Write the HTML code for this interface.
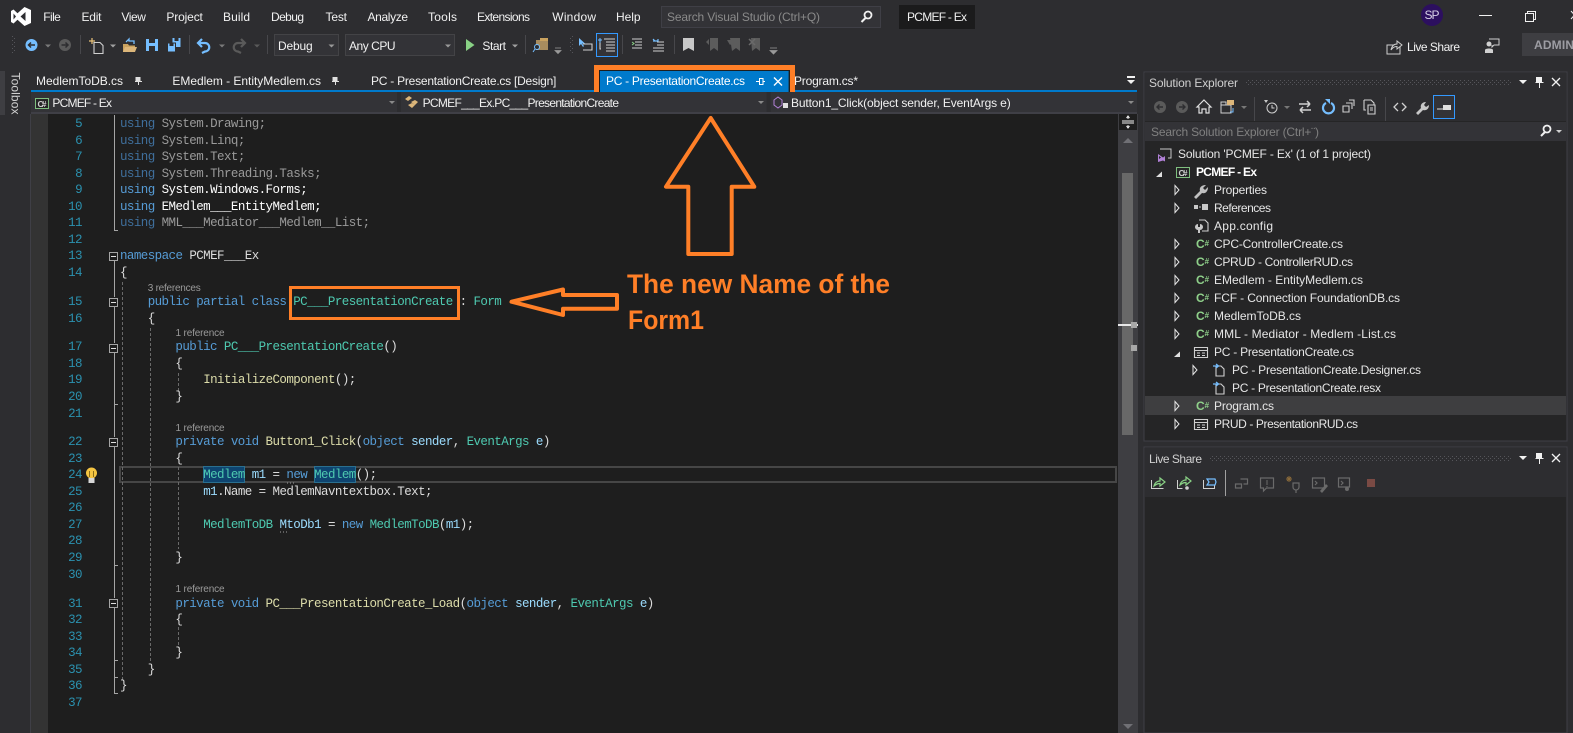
<!DOCTYPE html>
<html><head><meta charset="utf-8"><title>PCMEF - Ex</title>
<style>
html,body{margin:0;padding:0;background:#2d2d30;width:1573px;height:733px;overflow:hidden}
svg{display:block}
text{font-family:"Liberation Sans",sans-serif;font-size:12px;fill:#f1f1f1;white-space:pre}
.c text,text.c{font-family:"Liberation Mono",monospace;font-size:12.500px;letter-spacing:-.57px;fill:#dcdcdc}
.n text{font-family:"Liberation Mono",monospace;font-size:12.500px;letter-spacing:-.57px;fill:#2b91af;text-anchor:end}
.k{fill:#569cd6}.t{fill:#4ec9b0}.m{fill:#dcdcaa}.p{fill:#9cdcfe}.d{fill:#9a9a9a}.dk{fill:#3f6f9c}.b{fill:#fff}.w{fill:#fff;font-weight:bold}
.l text{font-size:10px;fill:#9a9a9a}
.tr text{fill:#e6e6e6}
.cs{font-weight:bold;font-size:12px;fill:#8fd08a}
.cs tspan+tspan{font-size:8px}
.f{stroke:#a5a5a5;fill:none}
.g{stroke:#6a6a6a;stroke-dasharray:3 2;fill:none}
.o{fill:#e0e0e0}.ex{fill:none;stroke:#e6e6e6;stroke-width:1}
.dim{fill:none;stroke:#6a6a6a;stroke-width:1.2}
.ic{fill:none;stroke:#d0d0d0;stroke-width:1.1}
</style></head><body>
<svg width="1573" height="733" viewBox="0 0 1573 733" xmlns="http://www.w3.org/2000/svg">
<defs>
<pattern id="dots" width="4" height="4" patternUnits="userSpaceOnUse"><rect width="1" height="1" fill="#55555a"/><rect x="2" y="2" width="1" height="1" fill="#55555a"/></pattern>
</defs>
<rect width="1573" height="733" fill="#2d2d30"/>

<!-- logo -->
<path fill="#fff" fill-rule="evenodd" d="M24.500 7 L31 10 V23 L24.500 26 L17.500 19.800 L13.500 23.500 L11 22 V11 L13.500 9.500 L17.500 13.200 Z M13.500 13.500 V19.500 L16 16.500 Z M25.500 12 L20.500 16.500 L25.500 21 Z"/>

<!-- menu -->
<g>
<text x="43.300" y="21" textLength="17.500">File</text>
<text x="81.500" y="21" textLength="20">Edit</text>
<text x="121.400" y="21" textLength="24.500">View</text>
<text x="166.400" y="21" textLength="36.500">Project</text>
<text x="223" y="21" textLength="27">Build</text>
<text x="271" y="21" textLength="33">Debug</text>
<text x="325.500" y="21" textLength="21.500">Test</text>
<text x="367.500" y="21" textLength="40.500">Analyze</text>
<text x="428" y="21" textLength="29">Tools</text>
<text x="477" y="21" textLength="53">Extensions</text>
<text x="552.300" y="21" textLength="43.700">Window</text>
<text x="616" y="21" textLength="24.500">Help</text>
</g>
<rect x="661.500" y="6.500" width="219" height="21" fill="#333337" stroke="#3f3f46"/>
<text x="667" y="21" textLength="153" style="fill:#8a8a8a">Search Visual Studio (Ctrl+Q)</text>
<g transform="translate(4,0)"><circle cx="864" cy="15" r="3.500" fill="none" stroke="#f1f1f1" stroke-width="1.800"/><path d="M861.500 18 L857.500 22" stroke="#f1f1f1" stroke-width="2"/></g>
<rect x="899" y="5" width="76" height="24" fill="#1b1b1c"/>
<text x="907" y="21" textLength="60">PCMEF - Ex</text>
<circle cx="1432" cy="15" r="11" fill="#2c0f5f"/>
<text x="1424.500" y="19" textLength="15" style="fill:#d8d0e8">SP</text>
<path d="M1479 15.500H1492" stroke="#f1f1f1"/>
<path d="M1525.500 13.500h8v8h-8zM1527.500 13.500v-2h8v8h-2" fill="none" stroke="#f1f1f1"/>
<path d="M1571 11L1578 19M1571 19L1578 11" stroke="#f1f1f1"/>

<!-- toolbar -->
<rect x="11" y="36" width="4" height="17" fill="url(#dots)"/>
<circle cx="31.500" cy="45" r="6" fill="#75beff"/><path d="M35 45H28.500M31 42.500L28.500 45L31 47.500" stroke="#2d2d30" stroke-width="1.500" fill="none"/>
<path d="M45 44.500h6l-3 3z" fill="#7a7a7a"/>
<circle cx="65" cy="45" r="6" fill="#5a5a5a"/><path d="M61.500 45H68M65.500 42.500L68 45L65.500 47.500" stroke="#2d2d30" stroke-width="1.500" fill="none"/>
<path d="M80.500 35V54M189.500 35V54M267.500 35V54M525.500 35V54M622.500 35V54M674.500 35V54" stroke="#47474b"/>
<g transform="translate(2,0)"><path d="M92 42.500h6l3 3v8h-9z" class="ic"/><path d="M90 38v6M87 41h6" stroke="#e8c27a" stroke-width="1.200"/></g>
<path d="M110 44.500h6l-3 3z" fill="#a0a0a0"/>
<g transform="translate(1,0)"><path d="M122 52V44h5l1 1.500h6V52z" fill="#c9a25f"/><path d="M122 52l2-5h12l-2 5z" fill="#dcb67a"/><path d="M125 42l3-3v2h5v3" fill="none" stroke="#75beff" stroke-width="1.300"/></g>
<g transform="translate(2,0)"><path d="M144 39h12v12h-12z" fill="#75beff"/><path d="M147 39h6v4h-6zM147 46h6v5h-6z" fill="#2d2d30"/></g>
<g transform="translate(2.500,0)"><path d="M170 38h8v9h-8z" fill="#75beff"/><path d="M165 43h8v9h-8z" fill="#75beff" stroke="#2d2d30"/><path d="M172 38h4v3h-4zM167 43h4v3h-4z" fill="#2d2d30"/></g>
<g transform="translate(3,0)"><path d="M199 39l-4 4 4 4M195.500 43h6.500a4 4 0 0 1 0 8.500l-3 1.500" fill="none" stroke="#75beff" stroke-width="2.200"/>
<path d="M216 44.500h6l-3 3z" fill="#7a7a7a"/>
<path d="M238 39l4 4-4 4M241.500 43h-6.500a4 4 0 0 0 0 8.500l3 1.500" fill="none" stroke="#5a5a5a" stroke-width="2.200"/></g>
<path d="M254 44.500h6l-3 3z" fill="#5a5a5a"/>
<rect x="274.500" y="34.500" width="64" height="21" fill="#333337" stroke="#434346"/>
<text x="278" y="50" textLength="34.700">Debug</text>
<path d="M328.500 44.500h6l-3 3z" fill="#999"/>
<rect x="345.500" y="34.500" width="109" height="21" fill="#333337" stroke="#434346"/>
<text x="349" y="50" textLength="46.600">Any CPU</text>
<path d="M445 44.500h6l-3 3z" fill="#999"/>
<path d="M466 39L474.500 45L466 51z" fill="#89d185"/>
<text x="482.400" y="50" textLength="23.600">Start</text>
<path d="M512 44.500h6l-3 3z" fill="#a0a0a0"/>
<path d="M536 40h12v10h-12z" fill="#a88c5e"/><path d="M540 38h8v3h-8z" fill="#c9a25f"/><circle cx="537" cy="47" r="2.500" fill="#2d2d30" stroke="#75beff"/><path d="M535 49l-2 3" stroke="#75beff"/>
<path d="M555 48h6M555 50.500h6l-3 3z" stroke="#999" fill="#999" stroke-width=".8"/>
<rect x="569" y="36" width="4" height="17" fill="url(#dots)"/>
<g transform="translate(1,0)"><path d="M578 38v8l2-2 2 3 1-1-2-2.500h3z" fill="#75beff"/><path d="M582 44h9v6h-9" class="ic"/></g>
<rect x="596.500" y="33.500" width="21" height="23" fill="#333337" stroke="#3399ff"/>
<g transform="translate(1,0)"><path d="M600 40h-1v9h1M603 39h11M605 42h9M605 45h9M605 48h9M605 51h9" class="ic"/><path d="M599 38v5M597 40h4" stroke="#75beff"/></g>
<g transform="translate(1,0)"><path d="M631 39h10M634 42h7M634 45h7M631 48h10" stroke="#d0d0d0" stroke-width="1.100" fill="none"/><path d="M631 42l2 1.500-2 1.500" stroke="#89d185" fill="none"/>
<path d="M656 42h7M656 45h7M652 48h11M652 51h11" stroke="#d0d0d0" stroke-width="1.100" fill="none"/><path d="M652 39l2 2M652 41h5v-2" stroke="#75beff" stroke-width="1.200" fill="none"/></g>
<path d="M683 38h11v13l-5.500-3-5.500 3z" fill="#c8c8c8"/>
<g transform="translate(2,0)"><path d="M708 38h8v13l-4-3-4 3z" fill="#5c5c5c"/><path d="M704 42l3-3v6z" fill="#5c5c5c"/></g>
<g transform="translate(3,0)"><path d="M727 38h10v13l-4-3-4 3z" fill="#5c5c5c"/><path d="M724 40h5l-2-2 4 4-4 3z" fill="#5c5c5c"/>
<path d="M748 38h9v13l-4-3-4 3z" fill="#5c5c5c"/><path d="M746 39l6 6M752 39l-6 6" stroke="#6a6a6a" stroke-width="1.500"/>
<path d="M767 48h7M767 50.500h7l-3.500 3.500z" stroke="#999" fill="#999" stroke-width=".8"/></g>

<rect x="1387" y="45" width="13" height="9" fill="none" stroke="#cfcfcf"/><path d="M1391 50c1-5 4-6 6-6v-3l5 4-5 4v-2.500c-3 0-4 1-6 3.500z" fill="#2d2d30" stroke="#cfcfcf"/>
<text x="1407" y="51" textLength="53">Live Share</text>
<circle cx="1489" cy="44" r="2.500" fill="#d0d0d0"/><path d="M1485 53v-3c0-2 8-2 8 0v3z" fill="#d0d0d0"/><path d="M1489 39h10v6h-5l-2 2v-2" fill="none" stroke="#d0d0d0"/>
<rect x="1522" y="33" width="51" height="23" fill="#3e3e42"/>
<text x="1534" y="49" textLength="40" style="font-weight:bold;fill:#9d9da3">ADMIN</text>

<!-- toolbox -->
<rect x="0" y="71" width="5" height="44" fill="#3e3e42"/>
<text transform="translate(11.500,72.500) rotate(90)" textLength="42" style="fill:#d0d0d0">Toolbox</text>

<!-- tabs -->
<text x="36" y="85" textLength="87">MedlemToDB.cs</text>
<path d="M135.500 77h5v4h1.500v1h-3v3h-1v-3h-3v-1h.5z" fill="#e0e0e0"/>
<text x="172.400" y="85" textLength="148.600">EMedlem - EntityMedlem.cs</text>
<path d="M332.500 77h5v4h1.500v1h-3v3h-1v-3h-3v-1h.5z" fill="#e0e0e0"/>
<text x="371" y="85" textLength="185.400">PC - PresentationCreate.cs [Design]</text>
<text x="794" y="85" textLength="64">Program.cs*</text>
<rect x="31" y="90" width="1106" height="2" fill="#007acc"/>
<path d="M1127 76h8v2h-8zM1127 80h8l-4 4z" fill="#f1f1f1"/>

<rect x="596.500" y="67.500" width="196" height="29" fill="#1e1e1e" stroke="#ff7f27" stroke-width="5"/>
<rect x="600" y="71" width="188.600" height="21" fill="#007acc"/>
<text x="606" y="85" textLength="139" style="fill:#fff">PC - PresentationCreate.cs</text>
<path d="M756 81.500h3M759.500 78.500h3.500v6h-3.500zM763 81.500h2" stroke="#fff" fill="none"/>
<path d="M774 77.500l8 8M782 77.500l-8 8" stroke="#fff" stroke-width="1.400"/>

<!-- nav bar -->
<rect x="31" y="92" width="1106" height="22" fill="#2d2d30"/>
<rect x="31" y="92" width="366" height="21" fill="#333337"/>
<rect x="401" y="92" width="365.600" height="21" fill="#333337"/>
<rect x="770.700" y="92" width="366.300" height="21" fill="#333337"/>
<rect x="31" y="112" width="1106" height="2" fill="#3f3f46"/>
<rect x="35.500" y="98.500" width="13" height="10" fill="#252526" stroke="#7fbf7f"/>
<text x="37.500" y="107" textLength="9" style="font-size:8.500px;font-weight:bold;fill:#d0d0d0">C#</text>
<text x="52.400" y="107" textLength="59.600">PCMEF - Ex</text>
<path d="M389 101h6l-3 3z" fill="#8a8a8a"/>
<g transform="translate(5,0)"><path d="M400 99l4-3 3 2-4 3zM406 102l4-2 3 2-3 3zM403 105l4-2 3 2-3 3z" fill="#dcb67a"/></g>
<text x="422.600" y="107" textLength="196.400">PCMEF___Ex.PC___PresentationCreate</text>
<path d="M758 101h6l-3 3z" fill="#8a8a8a"/>
<g transform="translate(3,0)"><path d="M771 100l4-3 4 3v5l-4 3-4-3z" fill="none" stroke="#b180d7"/><rect x="780" y="103" width="5" height="5" fill="#e0e0e0"/></g>
<text x="791" y="107" textLength="219.700">Button1_Click(object sender, EventArgs e)</text>
<path d="M1128 101h6l-3 3z" fill="#8a8a8a"/>

<!-- editor -->
<rect x="31" y="114" width="1087" height="619" fill="#1e1e1e"/>
<rect x="30" y="114" width="1" height="619" fill="#3f3f46"/>
<rect x="31" y="114" width="17" height="619" fill="#333333"/>

<rect x="120" y="467" width="996" height="15" fill="none" stroke="#464646" stroke-width="2"/>
<rect x="203.500" y="466.500" width="41" height="16" fill="#0e4470" stroke="#2a6f8f"/>
<rect x="314.500" y="466.500" width="41" height="16" fill="#0e4470" stroke="#2a6f8f"/>

<path class="f" d="M114.500 115V230.500H118M114.500 261V297M114.500 307V343M114.500 353V437M114.500 447V598M114.500 608V693.500H118M114.500 404.500H118M114.500 565.500H118M114.500 660.500H118M114.500 677.500H118"/>
<g fill="#1e1e1e" stroke="#a5a5a5">
<rect x="109.500" y="252.500" width="8" height="8"/><rect x="109.500" y="298.500" width="8" height="8"/><rect x="109.500" y="344.500" width="8" height="8"/><rect x="109.500" y="438.500" width="8" height="8"/><rect x="109.500" y="599.500" width="8" height="8"/>
</g>
<path d="M111 256.500h5M111 302.500h5M111 348.500h5M111 442.500h5M111 603.500h5" stroke="#e0e0e0"/>
<path class="g" d="M122.500 282V680M150.500 328V662M178.500 373V392M178.500 467V549M178.500 627V648"/>
<circle cx="91.500" cy="473" r="5.500" fill="#f5c542"/><path d="M88.500 478h6v5h-6z" fill="#d8d8d8"/><path d="M89.500 471v6M93.500 471v6" stroke="#8a6d1c"/>

<g class="n">
<text x="82" y="127">5</text><text x="82" y="144">6</text><text x="82" y="160">7</text><text x="82" y="177">8</text><text x="82" y="193">9</text><text x="82" y="210">10</text><text x="82" y="226">11</text><text x="82" y="243">12</text><text x="82" y="259">13</text><text x="82" y="276">14</text><text x="82" y="305">15</text><text x="82" y="322">16</text><text x="82" y="350">17</text><text x="82" y="367">18</text><text x="82" y="383">19</text><text x="82" y="400">20</text><text x="82" y="417">21</text><text x="82" y="445">22</text><text x="82" y="462">23</text><text x="82" y="478">24</text><text x="82" y="495">25</text><text x="82" y="511">26</text><text x="82" y="528">27</text><text x="82" y="544">28</text><text x="82" y="561">29</text><text x="82" y="578">30</text><text x="82" y="607">31</text><text x="82" y="623">32</text><text x="82" y="640">33</text><text x="82" y="656">34</text><text x="82" y="673">35</text><text x="82" y="689">36</text><text x="82" y="706">37</text>
</g>
<g class="l">
<text x="147.700" y="291" textLength="53">3 references</text>
<text x="175.500" y="336" textLength="49">1 reference</text>
<text x="175.500" y="431" textLength="49">1 reference</text>
<text x="175.500" y="592" textLength="49">1 reference</text>
</g>
<g class="c">
<text x="120" y="127"><tspan class="dk">using</tspan><tspan class="d"> System.Drawing;</tspan></text>
<text x="120" y="144"><tspan class="dk">using</tspan><tspan class="d"> System.Linq;</tspan></text>
<text x="120" y="160"><tspan class="dk">using</tspan><tspan class="d"> System.Text;</tspan></text>
<text x="120" y="177"><tspan class="dk">using</tspan><tspan class="d"> System.Threading.Tasks;</tspan></text>
<text x="120" y="193"><tspan class="k">using</tspan> <tspan class="b">System.Windows.Forms;</tspan></text>
<text x="120" y="210"><tspan class="k">using</tspan> <tspan class="b">EMedlem___EntityMedlem;</tspan></text>
<text x="120" y="226"><tspan class="dk">using</tspan><tspan class="d"> MML___Mediator___Medlem__List;</tspan></text>
<text x="120" y="259"><tspan class="k">namespace</tspan> PCMEF___Ex</text>
<text x="120" y="276">{</text>
<text x="147.700" y="305"><tspan class="k">public partial class</tspan> <tspan class="t">PC___PresentationCreate</tspan> : <tspan class="t">Form</tspan></text>
<text x="147.700" y="322">{</text>
<text x="175.400" y="350"><tspan class="k">public</tspan> <tspan class="t">PC___PresentationCreate</tspan>()</text>
<text x="175.400" y="367">{</text>
<text x="203.200" y="383"><tspan class="m">InitializeComponent</tspan>();</text>
<text x="175.400" y="400">}</text>
<text x="175.400" y="445"><tspan class="k">private void</tspan> <tspan class="m">Button1_Click</tspan>(<tspan class="k">object</tspan> <tspan class="p">sender</tspan>, <tspan class="t">EventArgs</tspan> <tspan class="p">e</tspan>)</text>
<text x="175.400" y="462">{</text>
<text x="203.200" y="478"><tspan class="t">Medlem</tspan> <tspan class="p">m1</tspan> = <tspan class="k">new</tspan> <tspan class="t">Medlem</tspan>();</text>
<text x="203.200" y="495"><tspan class="p">m1</tspan>.Name = MedlemNavntextbox.Text;</text>
<text x="203.200" y="528"><tspan class="t">MedlemToDB</tspan> <tspan class="p">MtoDb1</tspan> = <tspan class="k">new</tspan> <tspan class="t">MedlemToDB</tspan>(<tspan class="p">m1</tspan>);</text>
<text x="175.400" y="561">}</text>
<text x="175.400" y="607"><tspan class="k">private void</tspan> <tspan class="m">PC___PresentationCreate_Load</tspan>(<tspan class="k">object</tspan> <tspan class="p">sender</tspan>, <tspan class="t">EventArgs</tspan> <tspan class="p">e</tspan>)</text>
<text x="175.400" y="623">{</text>
<text x="175.400" y="656">}</text>
<text x="147.700" y="673">}</text>
<text x="120" y="689">}</text>
</g>
<path d="M280 532h1M283 532h1M286 532h1M287 483h1M290 483h1M293 483h1" stroke="#a0a0a0"/>

<!-- editor scrollbar -->
<rect x="1118" y="114" width="20" height="619" fill="#3e3e42"/>
<rect x="1119" y="114" width="18" height="16" fill="#1e1e1e"/>
<path d="M1122 121h12M1122 123h12M1128 116v3M1128 125v3M1126.500 118l1.500-2 1.500 2M1126.500 126l1.500 2 1.500-2" stroke="#f1f1f1" fill="none"/>
<path d="M1123 143l5-5 5 5z" fill="#707075"/>
<rect x="1122" y="173" width="11" height="262" fill="#686868"/>
<rect x="1118" y="324" width="20" height="2" fill="#e8e8e8"/>
<rect x="1131" y="322" width="6" height="6" fill="#a8a8a8"/>
<rect x="1131" y="345" width="6" height="6" fill="#a8a8a8"/>
<path d="M1123 724l5 5 5-5z" fill="#707075"/>

<!-- solution explorer -->
<rect x="1144" y="72" width="423" height="369" fill="#252526" stroke="#3f3f46"/>
<rect x="1145" y="73" width="421" height="48" fill="#2d2d30"/>
<text x="1149" y="87" textLength="89" style="fill:#d0d0d0">Solution Explorer</text>
<rect x="1245" y="80" width="267" height="6" fill="url(#dots)"/>
<path d="M1519 80h8l-4 4z" fill="#f1f1f1"/>
<path d="M1536 77h6v5h1.500v1h-3.500v5h-1v-5h-3.500v-1h.5z" fill="#f1f1f1"/>
<path d="M1552 78l8 8M1560 78l-8 8" stroke="#f1f1f1" stroke-width="1.300"/>
<circle cx="1160" cy="107" r="6" fill="#5a5a5a"/><path d="M1163 107h-6M1159.500 104.500L1157 107l2.500 2.500" stroke="#2d2d30" stroke-width="1.400" fill="none"/>
<circle cx="1182" cy="107" r="6" fill="#5a5a5a"/><path d="M1179 107h6M1182.500 104.500L1185 107l-2.500 2.500" stroke="#2d2d30" stroke-width="1.400" fill="none"/>
<path d="M1204 100l7 7h-2v6h-3v-4h-4v4h-3v-6h-2z" fill="none" stroke="#e0e0e0" stroke-width="1.200"/>
<path d="M1221 105h10v8h-10zM1221 102h5v3h-5z" fill="none" stroke="#d0d0d0"/><rect x="1227" y="100" width="7" height="5" fill="#dcb67a"/><path d="M1233 108v4h-3" stroke="#75beff" fill="none"/>
<path d="M1241 106h6l-3 3z" fill="#777"/>
<path d="M1254.500 97V121M1385.500 97V121" stroke="#47474b"/>
<path d="M1264 100l4 0-2 3z" fill="#c8c8c8"/><circle cx="1272" cy="108" r="5" fill="none" stroke="#d0d0d0"/><path d="M1272 105v3h2.500" stroke="#d0d0d0" fill="none"/>
<path d="M1284 106h6l-3 3z" fill="#777"/>
<path d="M1299 104h11M1310 104l-3-3M1310 104l-3 3M1311 110h-11M1300 110l3-3M1300 110l3 3" stroke="#d0d0d0" stroke-width="1.500" fill="none"/>
<path d="M1331 103a5.500 5.500 0 1 1-5 0" fill="none" stroke="#75beff" stroke-width="2.200"/><path d="M1325 99l5 0v5z" fill="#75beff"/>
<path d="M1343 106h6v6h-6zM1346 103h6v6M1349 100h5v6" class="ic"/>
<path d="M1364 100h7l3 3v2M1364 100v10h2M1368 105h7v9h-7zM1370 108h3M1370 110h3" class="ic"/>
<path d="M1398 103l-4 4 4 4M1402 103l4 4-4 4" stroke="#d0d0d0" stroke-width="1.300" fill="none"/>
<path d="M1416 113l5-5c-1-3 1-6 5-6l-2 3 2 2 3-2c0 4-3 6-6 5l-5 5z" fill="#c8c8c8"/>
<rect x="1433.500" y="95.500" width="21" height="23" fill="#333337" stroke="#3399ff"/>
<path d="M1437 109h6" stroke="#e0e0e0"/><rect x="1443" y="105" width="8" height="5" fill="#e0e0e0"/>
<rect x="1145" y="122" width="421" height="19" fill="#333337"/>
<text x="1151" y="136" textLength="168" style="fill:#808080">Search Solution Explorer (Ctrl+¨)</text>
<circle cx="1547" cy="129" r="3.500" fill="none" stroke="#f1f1f1" stroke-width="1.800"/><path d="M1545 132l-4 4" stroke="#f1f1f1" stroke-width="2"/>
<path d="M1556 130h6l-3 3z" fill="#d0d0d0"/>

<rect x="1145" y="396" width="421" height="19" fill="#3e3e40"/>

<!-- tree icons -->
<path d="M1160 149h11v9h-3" fill="none" stroke="#c8c8c8"/>
<path d="M1158 154l5 3.500 2-1.500v5.500l-2-1-5 1.500zM1159 156v3l2-1.500z" fill="#b180d7"/>
<path d="M1156 177l6-5.500v5.500z" fill="#e0e0e0"/>
<rect x="1176.500" y="167.500" width="13" height="10" fill="#252526" stroke="#7fbf7f"/>
<text x="1178.500" y="176" textLength="9" style="font-size:8.500px;font-weight:bold;fill:#d0d0d0">C#</text>
<g class="ex">
<path d="M1175 185.500l4 4.500-4 4.500zM1175 203.500l4 4.500-4 4.500zM1175 239.500l4 4.500-4 4.500zM1175 257.500l4 4.500-4 4.500zM1175 275.500l4 4.500-4 4.500zM1175 293.500l4 4.500-4 4.500zM1175 311.500l4 4.500-4 4.500zM1175 329.500l4 4.500-4 4.500zM1175 401.500l4 4.500-4 4.500zM1175 419.500l4 4.500-4 4.500zM1193 365.500l4 4.500-4 4.500z"/>
</g>
<path d="M1174 357l6-5.500v5.500z" fill="#e0e0e0"/>
<path d="M1194 197l6-6c-1-3 1-6 6-6l-3 3 2 2 3-3c0 5-3 7-6 6l-6 6z" fill="#c0c0c0"/>
<path d="M1194 205h4v4h-4z" fill="#c8c8c8"/><path d="M1199 207h2" stroke="#c8c8c8"/><rect x="1202" y="204" width="6" height="6" fill="#c8c8c8"/>
<path d="M1199 220h6l3 3v8h-6" class="ic"/><path d="M1198 224a3 3 0 0 0 0 6v3h2v-3a3 3 0 0 0 0-6v3h-2z" fill="#c8c8c8"/>
<g>
<text class="cs" x="1196" y="248"><tspan>C</tspan><tspan dy="-2">#</tspan></text>
<text class="cs" x="1196" y="266"><tspan>C</tspan><tspan dy="-2">#</tspan></text>
<text class="cs" x="1196" y="284"><tspan>C</tspan><tspan dy="-2">#</tspan></text>
<text class="cs" x="1196" y="302"><tspan>C</tspan><tspan dy="-2">#</tspan></text>
<text class="cs" x="1196" y="320"><tspan>C</tspan><tspan dy="-2">#</tspan></text>
<text class="cs" x="1196" y="338"><tspan>C</tspan><tspan dy="-2">#</tspan></text>
<text class="cs" x="1196" y="410"><tspan>C</tspan><tspan dy="-2">#</tspan></text>
</g>
<path d="M1194.500 347.500h13v10h-13zM1195 350.500h12M1197 353h3M1202 353h3M1197 355.500h3M1202 355.500h3" class="ic"/>
<path d="M1194.500 419.500h13v10h-13zM1195 422.500h12M1197 425h3M1202 425h3M1197 427.500h3M1202 427.500h3" class="ic"/>
<path d="M1216 366h5l3 3v7h-8zM1216 384h5l3 3v7h-8z" class="ic"/>
<path d="M1213 366h5M1216 364l2.500 2-2.500 2M1213 384h5M1216 382l2.500 2-2.500 2" stroke="#75beff" stroke-width="1.300" fill="none"/>

<g class="tr">
<text x="1178" y="158" textLength="193">Solution 'PCMEF - Ex' (1 of 1 project)</text>
<text x="1196" y="176" textLength="61" style="font-weight:bold;fill:#fff">PCMEF - Ex</text>
<text x="1214" y="194" textLength="53">Properties</text>
<text x="1214" y="212" textLength="57">References</text>
<text x="1214" y="230" textLength="59">App.config</text>
<text x="1214" y="248" textLength="129">CPC-ControllerCreate.cs</text>
<text x="1214" y="266" textLength="139">CPRUD - ControllerRUD.cs</text>
<text x="1214" y="284" textLength="149">EMedlem - EntityMedlem.cs</text>
<text x="1214" y="302" textLength="186">FCF - Connection FoundationDB.cs</text>
<text x="1214" y="320" textLength="87">MedlemToDB.cs</text>
<text x="1214" y="338" textLength="182">MML - Mediator - Medlem -List.cs</text>
<text x="1214" y="356" textLength="140">PC - PresentationCreate.cs</text>
<text x="1232" y="374" textLength="189">PC - PresentationCreate.Designer.cs</text>
<text x="1232" y="392" textLength="149">PC - PresentationCreate.resx</text>
<text x="1214" y="410" textLength="60">Program.cs</text>
<text x="1214" y="428" textLength="144">PRUD - PresentationRUD.cs</text>
</g>

<!-- live share panel -->
<rect x="1144" y="447" width="423" height="286" fill="#252526" stroke="#3f3f46"/>
<rect x="1145" y="448" width="421" height="49" fill="#2d2d30"/>
<text x="1149" y="463" textLength="53" style="fill:#d0d0d0">Live Share</text>
<rect x="1210" y="456" width="301" height="6" fill="url(#dots)"/>
<path d="M1519 456h8l-4 4z" fill="#f1f1f1"/>
<path d="M1536 453h6v5h1.500v1h-3.500v5h-1v-5h-3.500v-1h.5z" fill="#f1f1f1"/>
<path d="M1552 454l8 8M1560 454l-8 8" stroke="#f1f1f1" stroke-width="1.300"/>
<path d="M1151.500 480v8.500h12" fill="none" stroke="#d0d0d0"/><path d="M1154 486c1-4 4-5 6-5v-3l5 4-5 4v-2.500c-3 0-4 1-6 2.500z" fill="none" stroke="#89d185" stroke-width="1.200"/>
<path d="M1177.500 480v8.500h5" fill="none" stroke="#d0d0d0"/><path d="M1180 485c1-4 4-5 6-5v-3l5 4-5 4v-2.500c-3 0-4 1-6 2.500z" fill="none" stroke="#89d185" stroke-width="1.200"/><circle cx="1187" cy="488" r="1.800" fill="#d0d0d0"/>
<path d="M1203.500 480v8.500h11v-3" fill="none" stroke="#d0d0d0"/><path d="M1207 479h8l1 3-1 3h-8l2-3z" fill="none" stroke="#75beff" stroke-width="1.200"/>
<path d="M1225.500 470V496" stroke="#a0a0a0"/>
<path class="dim" d="M1235.500 484h6v4h-6zM1240.500 479h7v5h-4"/>
<path class="dim" d="M1260.500 478h13v10h-7l-3 3v-3h-3z"/><path d="M1267 480v5M1267 486v1" stroke="#6a6a6a"/>
<path class="dim" d="M1293 483v4a3 3 0 0 0 6 0v-4zM1296 490v3"/><path d="M1286 479h6M1289 476v6M1287 477l4 4M1291 477l-4 4" stroke="#8a6a3a"/>
<path class="dim" d="M1312.500 478h12v10h-12zM1315 481l2 2-2 2"/><path d="M1320 491l6-7 2 2-6 7z" fill="#6a6a6a"/>
<path class="dim" d="M1338.500 478h11v9h-11zM1341 481l2 2-2 2"/><circle cx="1347" cy="489" r="2" fill="#6a6a6a"/>
<rect x="1367" y="479" width="8" height="8" fill="#7a4a44"/>

<!-- annotations -->
<g fill="none" stroke="#ff7f27" stroke-width="4" stroke-linejoin="round">
<path d="M710.700 118L666 186.700H688.300V254H731.700V186.700H754.300Z"/>
<path d="M511.500 301.700L563 289.500V295H617V308.700H563V315Z"/>
</g>
<rect x="290.500" y="287.500" width="168" height="31" fill="none" stroke="#ff7f27" stroke-width="3"/>
<text x="627" y="293" textLength="263" lengthAdjust="spacingAndGlyphs" style="font-size:26.500px;font-weight:bold;fill:#ff7f27">The new Name of the</text>
<text x="628" y="329" textLength="76" lengthAdjust="spacingAndGlyphs" style="font-size:26.500px;font-weight:bold;fill:#ff7f27">Form1</text>
</svg>
</body></html>
